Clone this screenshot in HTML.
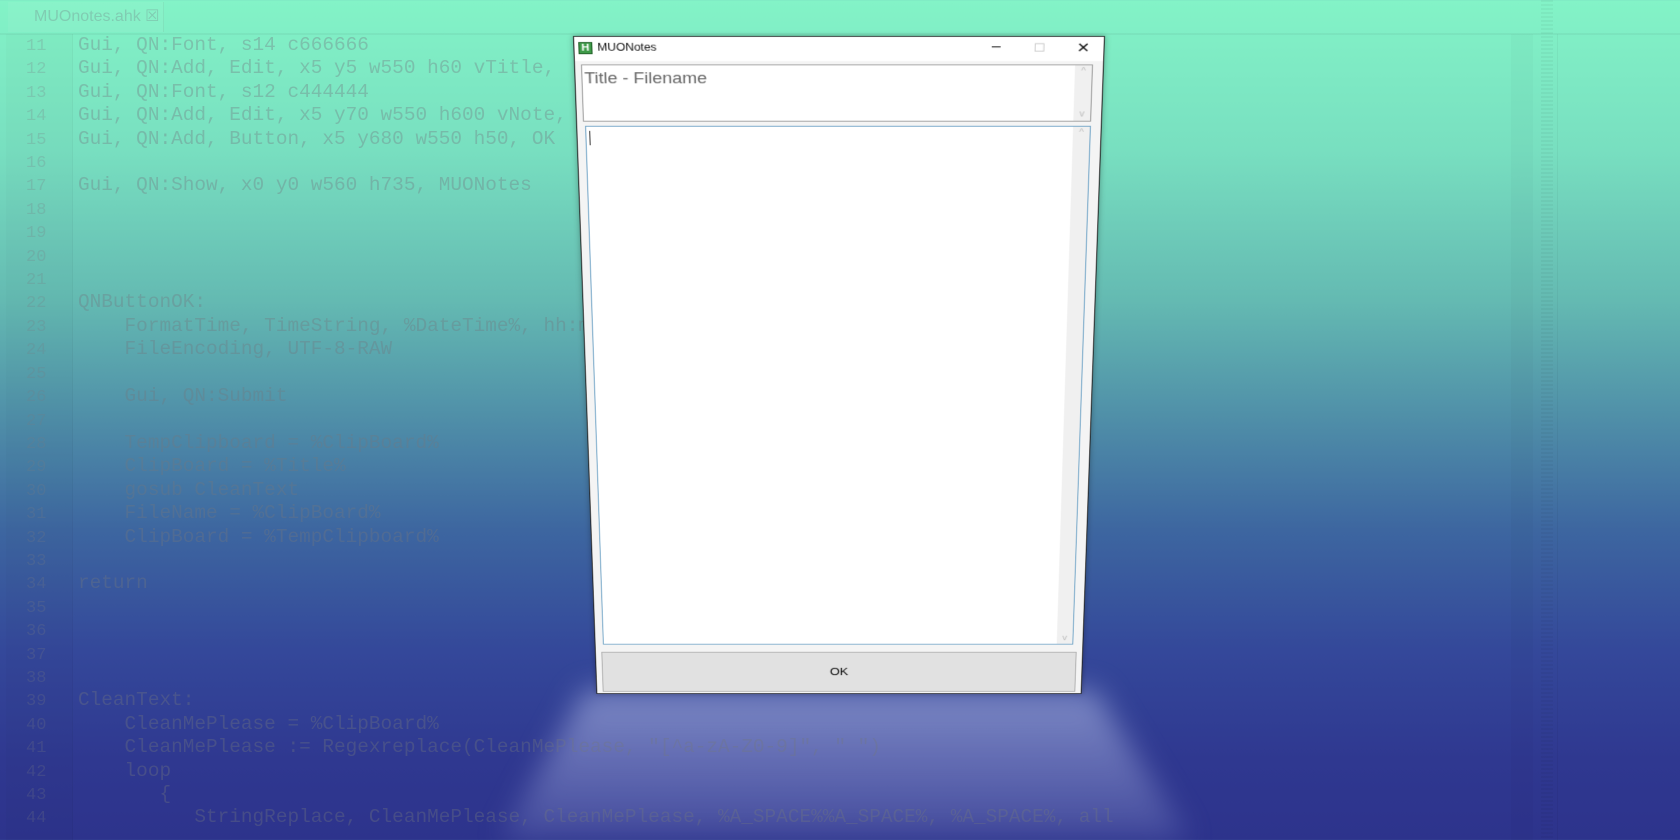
<!DOCTYPE html>
<html><head><meta charset="utf-8"><style>
html,body{margin:0;padding:0;width:1680px;height:840px;overflow:hidden}
body{position:relative;background:linear-gradient(180deg,#83f3c7 0px,#78dfc0 150px,#64bab2 300px,#4f8ea8 420px,#3d66a0 530px,#34489a 650px,#2f3890 760px,#2d338c 840px);font-family:"Liberation Sans",sans-serif}
.glow{position:absolute;left:0;top:0;width:1680px;height:840px;clip-path:polygon(585px 690px,1095px 690px,1190px 840px,500px 840px);background:linear-gradient(180deg,rgba(185,195,235,0.55) 0px,rgba(160,170,220,0.4) 60%,rgba(140,150,210,0.22) 100%);background-size:100% 150px;background-position:0 690px;background-repeat:no-repeat}
.glowwrap{position:absolute;left:0;top:0;width:1680px;height:840px;filter:blur(14px)}
.code{position:absolute;left:78px;top:34px;font-family:"Liberation Mono",monospace;font-size:19.4px;line-height:23.4px;color:rgba(115,118,128,0.36);white-space:pre}
.nums{position:absolute;left:26px;top:35px;font-family:"Liberation Mono",monospace;font-size:17px;line-height:23.4px;color:rgba(120,122,132,0.25);white-space:pre}
.gutter{position:absolute;left:6px;top:34px;width:66px;height:806px;border-right:1px solid rgba(0,0,0,0.03);background:rgba(0,0,0,0.015)}
.tabbar{position:absolute;left:0;top:0;width:1680px;height:33px;border-bottom:2px solid rgba(0,0,0,0.04)}
.tab{position:absolute;left:8px;top:2px;width:156px;height:30px;background:rgba(255,255,255,0.05);border-right:1px solid rgba(0,0,0,0.05);font-size:16px;color:rgba(120,160,150,0.45);line-height:30px;padding-left:26px;box-sizing:border-box}
.sep{position:absolute;left:1541px;top:0;width:12px;height:840px;background:repeating-linear-gradient(180deg,rgba(0,0,0,0.04) 0 2px,transparent 2px 4px)}
.rp{position:absolute;left:1557px;top:34px;width:123px;height:806px;border-left:1px solid rgba(0,0,0,0.04)}
.sb{position:absolute;left:1511px;top:34px;width:22px;height:806px;background:rgba(0,0,0,0.02)}
.win{position:absolute;left:573px;top:36px;width:532px;height:833px;background:#f4f4f4;border:1px solid #222;box-sizing:border-box;transform-origin:50% 0;transform:perspective(4314px) rotateX(-30deg);box-shadow:0 0 6px rgba(0,0,0,0.3)}
.tb{position:absolute;left:0;top:0;width:100%;height:28px;background:#fff}
.ic{position:absolute;left:4px;top:6px;width:14px;height:14px;background:#3e9a48;border:1px solid #1d5d24;box-sizing:border-box;color:#fff;font-size:11px;font-weight:bold;line-height:12px;text-align:center}
.tt{position:absolute;left:23px;top:5px;font-size:12px;color:#111}
.ctl{position:absolute;top:3px;font-size:16px;color:#111}
.e1{position:absolute;left:6px;top:32px;width:514px;height:67px;background:#fff;border:1px solid #9a9a9a;box-sizing:border-box}
.e1 span{position:absolute;left:2px;top:5px;font-size:18px;color:#666}
.scr{position:absolute;right:0;top:0;width:17px;height:100%;background:#f0f0f0;color:#bbb;font-size:10px;text-align:center}
.e2{position:absolute;left:8px;top:104px;width:512px;height:660px;background:#fff;border:1px solid #6fa3c6;box-sizing:border-box}
.cur{position:absolute;left:3px;top:5px;width:1px;height:17px;background:#333}
.btn{position:absolute;left:6px;top:774px;width:518px;height:55px;background:#e1e1e1;border:1px solid #adadad;box-sizing:border-box;text-align:center;line-height:53px;font-size:14px;color:#111}
</style></head><body>
<div class="glowwrap"><div class="glow"></div></div>
<div class="tabbar"><div class="tab">MUOnotes.ahk ☒</div></div>
<div class="gutter"></div>
<div class="sb"></div>
<div class="sep"></div>
<div class="rp"></div>
<div class="nums">11
12
13
14
15
16
17
18
19
20
21
22
23
24
25
26
27
28
29
30
31
32
33
34
35
36
37
38
39
40
41
42
43
44</div>
<div class="code">Gui, QN:Font, s14 c666666
Gui, QN:Add, Edit, x5 y5 w550 h60 vTitle,
Gui, QN:Font, s12 c444444
Gui, QN:Add, Edit, x5 y70 w550 h600 vNote,
Gui, QN:Add, Button, x5 y680 w550 h50, OK

Gui, QN:Show, x0 y0 w560 h735, MUONotes




QNButtonOK:
    FormatTime, TimeString, %DateTime%, hh:mm
    FileEncoding, UTF-8-RAW

    Gui, QN:Submit

    TempClipboard = %ClipBoard%
    ClipBoard = %Title%
    gosub CleanText
    FileName = %ClipBoard%
    ClipBoard = %TempClipboard%

return




CleanText:
    CleanMePlease = %ClipBoard%
    CleanMePlease := Regexreplace(CleanMePlease, "[^a-zA-Z0-9]", " ")
    loop
       {
          StringReplace, CleanMePlease, CleanMePlease, %A_SPACE%%A_SPACE%, %A_SPACE%, all</div>
<div class="win">
 <div class="tb"><div class="ic">H</div><div class="tt">MUONotes</div>
  <div class="ctl" style="left:418px">&#8211;</div>
  <div class="ctl" style="left:460px;color:#bbb;font-size:13px;top:5px">☐</div>
  <div class="ctl" style="left:503px">✕</div></div>
 <div class="e1"><span>Title - Filename</span><div class="scr"><div style="margin-top:2px">^</div><div style="position:absolute;bottom:2px;width:17px">v</div></div></div>
 <div class="e2"><div class="cur"></div><div class="scr"><div style="margin-top:2px">^</div><div style="position:absolute;bottom:2px;width:17px">v</div></div></div>
 <div class="btn">OK</div>
</div>
</body></html>
